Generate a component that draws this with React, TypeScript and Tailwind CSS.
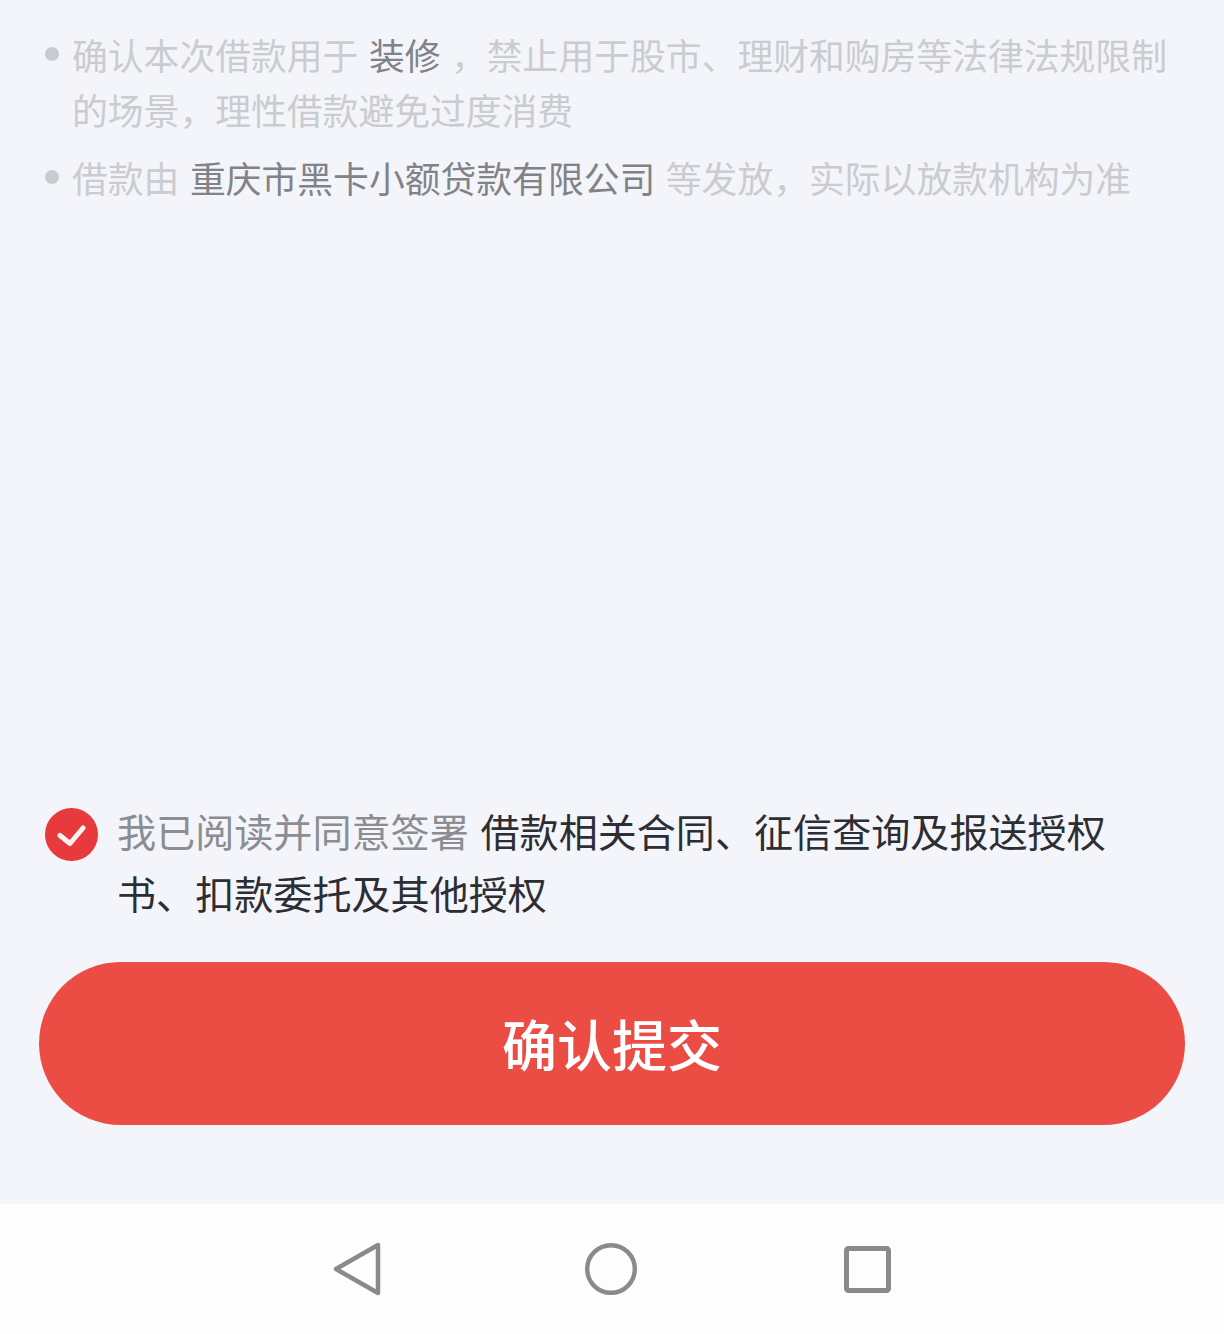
const cjk = "font-['Noto_Sans_CJK_SC','Noto_Sans',sans-serif]";

function Dark({ children }: { children: string }) {
  return <span className="text-[#818388]">{children}</span>;
}

function Bullet({ children }: { children: React.ReactNode }) {
  return (
    <div className="flex">
      <span className="mt-[20px] mr-[13px] h-[14px] w-[14px] shrink-0 rounded-full bg-[#c9cbd1]" />
      <p className="flex-1 text-[35.8px] leading-[55px] text-[#cacccf] [word-spacing:2.5px]">{children}</p>
    </div>
  );
}

export default function App() {
  return (
    <div className={`flex h-[1334px] w-[1224px] flex-col bg-[#f4f5fa] ${cjk}`}>
      <div className="flex flex-1 flex-col">
        {/* Notes */}
        <div className="flex flex-col gap-[13px] pt-[27px] pl-[45px] pr-[50px]">
          <Bullet>
            确认本次借款用于 <Dark>装修</Dark> ，禁止用于股市、理财和购房等法律法规限制的场景，理性借款避免过度消费
          </Bullet>
          <Bullet>
            借款由 <Dark>重庆市黑卡小额贷款有限公司</Dark> 等发放，实际以放款机构为准
          </Bullet>
        </div>

        {/* Agreement */}
        <div className="mt-auto flex pl-[45px] pr-[100px]">
          <div className="mt-[9px] mr-[20px] flex h-[53px] w-[53px] shrink-0 items-center justify-center rounded-full bg-[#e8393d]">
            <svg width="30" height="24" viewBox="0 0 30 24" fill="none">
              <path d="M3 12.5 L13 20.5 L26 5" stroke="#fdf2f2" strokeWidth="5" strokeLinecap="round" strokeLinejoin="round" />
            </svg>
          </div>
          <p className="flex-1 text-[39.1px] leading-[62px] text-[#2c2e33] -ml-px">
            <span className="mr-[3px] text-[#8b8d92]">我已阅读并同意签署</span> 借款相关合同、征信查询及报送授权书、扣款委托及其他授权
          </p>
        </div>

        {/* Submit */}
        <div className="px-[39px] pt-[39px] pb-[79px]">
          <button className="flex h-[163px] w-full items-center justify-center rounded-full bg-[#eb4d45] pb-[3px] text-[55px] font-medium text-white">
            确认提交
          </button>
        </div>
      </div>

      {/* Nav bar */}
      <div className="h-[130px] shrink-0 bg-[#fdfdfd]">
        <div className="flex h-full items-center">
          <svg className="ml-[333px]" width="48" height="54" viewBox="0 0 48 54" fill="none">
            <path d="M45 3 L3 27 L45 51 Z" stroke="#8a8a8a" strokeWidth="4.5" strokeLinejoin="round" />
          </svg>
          <svg className="ml-[204px]" width="52" height="52" viewBox="0 0 52 52" fill="none">
            <circle cx="26" cy="26" r="23.8" stroke="#8a8a8a" strokeWidth="4.4" />
          </svg>
          <svg className="ml-[207px]" width="47" height="47" viewBox="0 0 47 47" fill="none">
            <rect x="2.5" y="2.5" width="42" height="42" rx="2" stroke="#8a8a8a" strokeWidth="5" />
          </svg>
        </div>
      </div>
    </div>
  );
}
